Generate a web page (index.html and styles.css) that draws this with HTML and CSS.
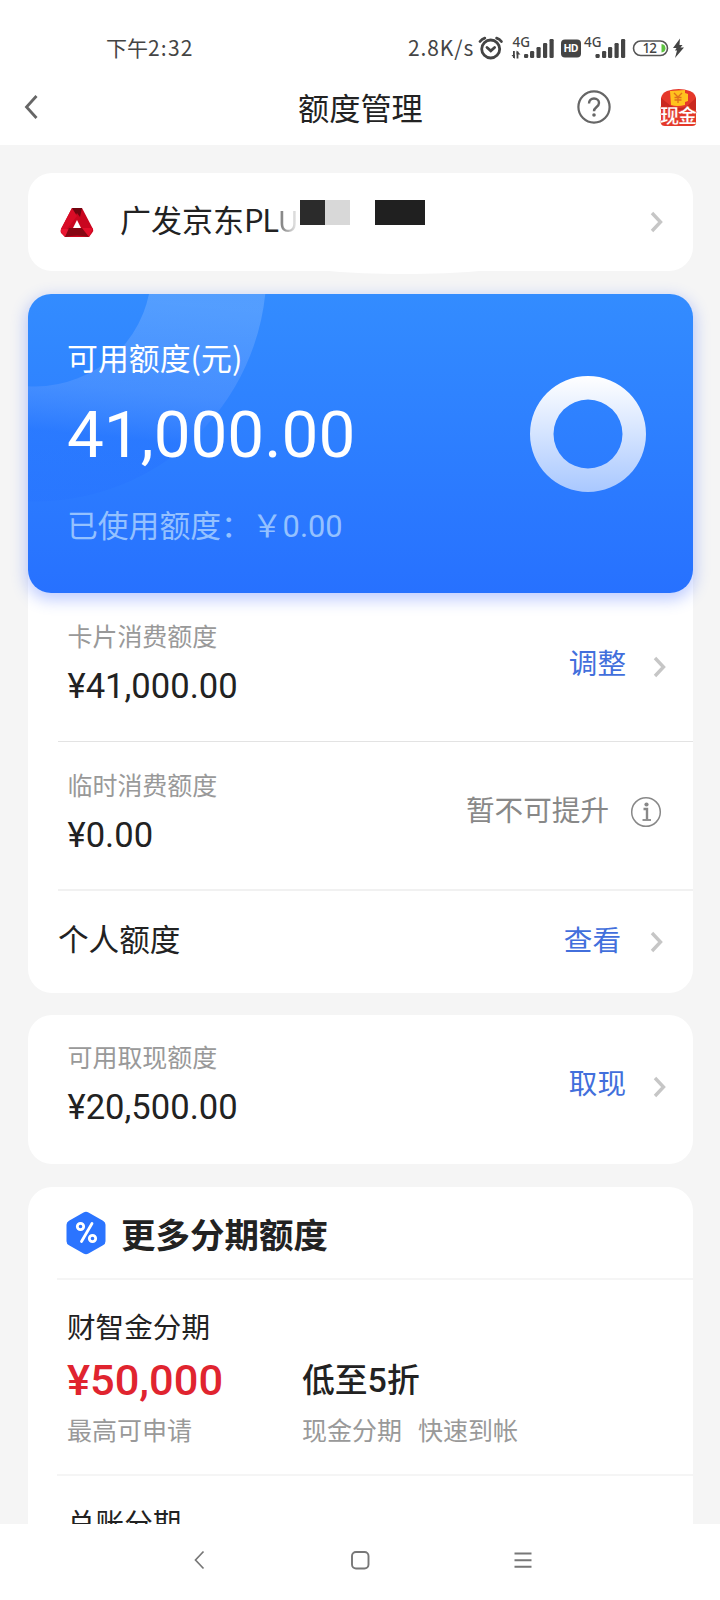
FILE: index.html
```html
<!DOCTYPE html>
<html lang="zh-CN">
<head>
<meta charset="utf-8">
<title>额度管理</title>
<link rel="stylesheet" href="styles.css">
</head>
<body>
<svg class="defs" width="0" height="0"><symbol id="chev" viewBox="0 0 14 22"><path d="M2 2l8.500 9-8.500 9" fill="none" stroke="#c6c6c6" stroke-width="3.400"/></symbol></svg>
<header class="top">
  <div class="status">
    <span class="clock">下午<i class="time">2:32</i></span>
    <span class="speed">2.8K/s</span>
    <svg class="sysicons" width="214" height="30" viewBox="476 33 214 30">
      <g fill="none" stroke="#444" stroke-width="2.800" stroke-linecap="round">
        <circle cx="490.700" cy="49" r="9"/>
        <path d="M487 47.500l3.800 3.300 3.800-3.300M480 41.500q2-2.500 4.800-3.300M496.600 38.200q3 .8 4.800 3.300"/>
      </g>
      <g fill="#444">
        <path d="M513 58V51h1.800v7zM516.600 58.500v-7h1.800v7z"/><path d="M511.500 55l3.300 4v-4zM520.500 54.500l-3.900-4v4z"/>
        <rect x="524" y="54" width="4.200" height="4" rx="1.200"/><rect x="530" y="51" width="4.200" height="7" rx="1.200"/><rect x="536.500" y="47" width="4.200" height="11" rx="1.200"/><rect x="543" y="43" width="4.200" height="15" rx="1.200"/><rect x="549.500" y="39" width="4.200" height="19" rx="1.200"/>
        <rect x="561" y="39.500" width="20" height="18" rx="4"/>
        <rect x="595.500" y="54" width="4.200" height="4" rx="1.200"/><rect x="602" y="51" width="4.200" height="7" rx="1.200"/><rect x="608" y="47" width="4.200" height="11" rx="1.200"/><rect x="614.500" y="43" width="4.200" height="15" rx="1.200"/><rect x="621" y="39" width="4.200" height="19" rx="1.200"/>
        <path d="M680 38.500l-7 9.500h3.500l-1.500 2.500h2l-2 7.500 9-10.500h-3.500l2-2.500h-3z"/>
      </g>
      <rect x="633.500" y="41" width="34" height="14.500" rx="7.200" fill="none" stroke="#555" stroke-width="1.600"/>
      <path d="M661.500 44v8.500q4-.5 4-4.200t-4-4.300z" fill="#5cc23f"/>
      <g class="sys-t">
        <text x="512.500" y="46.500" font-size="13.500" textLength="17.500" lengthAdjust="spacingAndGlyphs">4G</text>
        <text x="584" y="46.500" font-size="13.500" textLength="17.500" lengthAdjust="spacingAndGlyphs">4G</text>
        <text x="563.500" y="52.300" font-size="10.500" font-weight="700" class="hd" textLength="15">HD</text>
        <text x="642.500" y="53.200" font-size="13.500" textLength="14.500">12</text>
      </g>
    </svg>
  </div>
  <nav class="titlebar">
    <svg class="back" width="16" height="26" viewBox="0 0 16 26"><path d="M13.500 2L3.500 13l10 11" fill="none" stroke="#666" stroke-width="2.800"/></svg>
    <h1 class="page-title">额度管理</h1>
    <svg class="help" width="36" height="36" viewBox="0 0 36 36"><circle cx="18" cy="18" r="15.600" fill="none" stroke="#666" stroke-width="2.200"/><path d="M13 14.500c0-3 2-5 5-5s5 1.900 5 4.500c0 4-5 4-5 8.200" fill="none" stroke="#666" stroke-width="2.400"/><circle cx="18" cy="26" r="1.800" fill="#666"/></svg>
    <svg class="cash" width="40" height="40" viewBox="0 0 40 40">
      <path d="M2 10Q3 5 8 3Q20-1 31 3Q36 5 37 10V35Q37 38 33 38H6Q2 38 2 35z" fill="#e5382a"/>
      <path d="M2 10l10 8q8 4 16 0l9-8v12H2z" fill="#c9281e"/>
      <path d="M11 3l15-1v3l3 1v7l-3 1v3q-8 2-14 0z" fill="#ffc21e"/>
      <path d="M15 5l4 4 4-4M19 9v6M15.500 9.500h7M15.500 12h7" fill="none" stroke="#e0701c" stroke-width="1.300"/>
      <text class="cash-t" x="1" y="35" font-size="19" textLength="37">现金</text>
    </svg>
  </nav>
</header>
<main class="page">
  <section class="card account">
    <svg class="logo" width="34" height="30" viewBox="0 0 34 30">
      <path d="M12 0h10l11 21q1 2-1 4l-3 4H5l-4-4q-1-2 0-4z" fill="#c9061f"/>
      <path d="M12 0h10l-2 9-3-4-2 4z" fill="#6f0510"/><path d="M12 0l5 8-10 13-6 0z" fill="#d80c26"/><path d="M1 21l5 0 7 1-8 7-4-5z" fill="#ea1733"/><path d="M5 29l4-9h16l4 9q-12-3-24 0z" fill="#860713"/><path d="M22 20l11 0-4 9z" fill="#e40f2b"/>
      <path d="M17 12l4 8h-8z" fill="#fff"/>
    </svg>
    <span class="account-name">广发京东<i class="pl">PL</i><i class="fade">U</i></span>
    <span class="mask"><i class="m-dark"></i><i class="m-light"></i><i class="m-gap"></i><i class="m-black"></i></span>
    <svg class="chev"><use href="#chev"/></svg>
  </section>
  <section class="quota">
    <div class="hero">
      <svg class="arcs" width="665" height="299" viewBox="0 0 665 299"><defs><linearGradient id="arc" gradientUnits="userSpaceOnUse" x1="40" y1="0" x2="20" y2="212"><stop offset="0" stop-color="#fff" stop-opacity=".16"/><stop offset=".42" stop-color="#e4e0ff" stop-opacity=".12"/><stop offset=".65" stop-color="#1a5cff" stop-opacity=".16"/><stop offset="1" stop-color="#1a5cff" stop-opacity=".08"/></linearGradient></defs><circle cx="7" cy="-24" r="174" fill="none" stroke="url(#arc)" stroke-width="115"/></svg>
      <div class="hero-text">
        <div class="hero-label">可用额度(元)</div>
        <div class="hero-amount">41,000.00</div>
        <div class="hero-used">已使用额度：￥<i class="num">0.00</i></div>
      </div>
      <svg class="ring" width="116" height="116" viewBox="0 0 116 116"><defs><linearGradient id="ring" x1="0" y1="0" x2="0" y2="1"><stop offset="0" stop-color="#fff"/><stop offset="1" stop-color="#a9c8ff"/></linearGradient></defs><path fill="url(#ring)" fill-rule="evenodd" d="M58 0a58 58 0 1 1 0 116a58 58 0 1 1 0-116zM58 23.500a34.500 34.500 0 1 0 0 69a34.500 34.500 0 1 0 0-69z"/></svg>
    </div>
    <div class="row row-card">
      <div class="pair"><span class="label">卡片消费额度</span><span class="amount">¥41,000.00</span></div>
      <a class="link">调整</a><svg class="chev"><use href="#chev"/></svg>
    </div>
    <div class="row row-temp">
      <div class="pair"><span class="label">临时消费额度</span><span class="amount">¥0.00</span></div>
      <span class="muted">暂不可提升</span>
      <svg class="info" width="32" height="32" viewBox="0 0 32 32"><g fill="none" stroke="#888" stroke-width="1.500"><circle cx="16" cy="16" r="14.300"/><path d="M13.500 13h3.500v10.500" stroke-width="2.400"/><path d="M12.500 24h8.500" stroke-width="1.800"/></g><circle cx="16.500" cy="8.500" r="2.100" fill="#888"/></svg>
    </div>
    <div class="row row-person"><span class="person">个人额度</span><a class="link">查看</a><svg class="chev"><use href="#chev"/></svg></div>
  </section>
  <section class="card cashout">
    <div class="pair"><span class="label">可用取现额度</span><span class="amount">¥20,500.00</span></div>
    <a class="link">取现</a><svg class="chev"><use href="#chev"/></svg>
  </section>
  <section class="more">
    <div class="more-head">
      <svg width="40" height="44" viewBox="0 0 40 44"><path d="M17.500 1.500q2.500-1.300 5 0l14.500 8.200q2.500 1.400 2.500 4v16.600q0 2.600-2.500 4l-14.500 8.200q-2.500 1.300-5 0L3 34.300q-2.500-1.400-2.500-4V13.700q0-2.600 2.500-4z" fill="#2b74ff"/><g fill="none" stroke="#fff" stroke-width="2.800" stroke-linecap="round"><circle cx="14.500" cy="15.500" r="3.200"/><circle cx="26.500" cy="27.500" r="3.200"/><path d="M26 12.500L15.500 30.500"/></g></svg>
      <h2 class="more-title">更多分期额度</h2>
    </div>
    <div class="plan">
      <div class="plan-name">财智金分期</div>
      <div class="plan-main"><span class="price">¥50,000</span><span class="promo">低至<i class="five">5</i>折</span></div>
      <div class="plan-sub"><span class="sub-a">最高可申请</span><span class="sub-b">现金分期</span><span>快速到帐</span></div>
    </div>
    <div class="next">总账分期</div>
  </section>
</main>
<footer class="navbar">
  <svg width="12" height="20" viewBox="0 0 12 20"><path d="M9.500 1.500L1.500 10l8 8.500" fill="none" stroke="#777" stroke-width="1.700"/></svg>
  <svg width="20" height="20" viewBox="0 0 20 20"><rect x="2" y="2" width="16.500" height="16.500" rx="4" fill="none" stroke="#777" stroke-width="1.900"/></svg>
  <svg width="18" height="20" viewBox="0 0 18 20"><path d="M.5 3.500h17M.5 10.200h17M.5 16.800h17" stroke="#777" stroke-width="1.900"/></svg>
</footer>
</body>
</html>
```

FILE: styles.css
```css
* { box-sizing: border-box; margin: 0; padding: 0; }
i { font-style: normal; }
svg { display: block; flex: none; }
.defs { position: absolute; }
body {
  width: 720px; height: 1600px; overflow: hidden;
  display: flex; flex-direction: column;
  background: #f5f5f5; color: #222;
  font-family: "Noto Sans CJK SC", sans-serif;
  white-space: nowrap;
}
.top { height: 145px; background: #fff; flex: none; }
.status { display: flex; height: 68px; padding: 27px 30px 0 106px; color: #444; font-size: 21px; line-height: 40px; }
.clock { width: 302px; }
.time { letter-spacing: 1.2px; }
.speed { width: 68px; letter-spacing: .9px; }
.sysicons { margin-top: 6px; }
.sys-t { font-family: "Noto Sans", sans-serif; fill: #444; font-weight: 500; }
.hd { fill: #fff; }
.titlebar { display: flex; align-items: flex-start; height: 77px; padding-left: 23px; }
.back { margin-top: 26px; }
.page-title { margin-left: 259px; width: 278px; font-size: 31.200px; font-weight: 400; line-height: 40px; margin-top: 19px; }
.help { margin-top: 21px; }
.cash { margin: 20px 0 0 47px; }
.cash-t { font-weight: 700; fill: #fff; stroke: #e03424; stroke-width: .3px; }
.page { flex: none; height: 1379px; overflow: hidden; padding: 28px 27px 0 28px; }
.card, .quota { background: #fff; border-radius: 24px; }
.account { position: relative; display: flex; height: 98px; padding-left: 32px; }
.account::after { content: ""; position: absolute; left: 270px; bottom: -3px; width: 212px; height: 10px; border-radius: 50% / 0 0 100% 100%; background: #fff; }
.logo { margin-top: 35px; }
.account-name { margin: 26px 0 0 26px; width: 152px; font-size: 31px; line-height: 40px; display: flex; }
.pl { letter-spacing: -1.300px; }
.fade { background: linear-gradient(90deg, #888 20%, #e5e5e5 85%); -webkit-background-clip: text; background-clip: text; color: transparent; font-size: 29px; }
.mask { display: flex; margin: 27px 0 0 28px; height: 25px; }
.mask i { width: 25px; }
.m-dark { background: #2b2b2b; }
.m-light { background: #d8d8d8; }
.mask .m-black { width: 50px; background: #202020; }
.chev { width: 14px; height: 22px; }
.account .chev { margin: 38px 29px 0 auto; }
.quota { margin-top: 23px; height: 699px; }
.hero { position: relative; height: 299px; border-radius: 23px; background: linear-gradient(#338cff, #2771ff); box-shadow: 0 5px 15px 2px rgba(60, 100, 255, .32); display: flex; color: #fff; }
.arcs { position: absolute; inset: 0; border-radius: 23px; overflow: hidden; }
.hero-text { position: relative; padding: 42px 0 0 39px; width: 502px; }
.hero-label { font-size: 30.900px; line-height: 42px; }
.hero-amount { font-family: Roboto, sans-serif; font-size: 65.600px; line-height: 80px; margin-top: 17px; }
.hero-used { color: #94c1ff; font-size: 30.800px; line-height: 40px; margin-top: 29px; }
.num, .amount { font-family: Roboto, sans-serif; }
.ring { margin-top: 82px; }
.row { display: flex; margin-left: 30px; }
.pair { display: flex; flex-direction: column; }
.label { font-size: 25px; line-height: 36px; color: #999; letter-spacing: -.05px; }
.amount { font-size: 34.600px; line-height: 42px; margin-top: 12px; }
.link { color: #426fdc; font-size: 28.600px; line-height: 40px; }
.row-card { height: 149px; padding: 24px 26px 0 9.500px; border-bottom: 1px solid #e3e3e3; }
.row .link, .cashout .link { margin-left: auto; }
.row-card .link { margin-top: 25px; }
.row-card .chev { margin: 39px 0 0 27px; }
.row-temp { height: 149px; padding: 24px 31px 0 9.500px; border-bottom: 2px solid #f1f1f1; }
.muted { margin: 23px 0 0 auto; font-size: 28.600px; line-height: 40px; color: #888; }
.info { margin: 30px 0 0 21px; }
.row-person { height: 102px; padding: 28px 29px 0 0; }
.person { font-size: 30.600px; line-height: 40px; margin-top: -1px; }
.row-person .link { margin-right: 1px; }
.row-person .chev { margin: 12px 0 0 28px; }
.cashout { display: flex; height: 149px; margin-top: 22px; padding: 23px 26px 0 39.500px; }
.cashout .link { margin-top: 24px; }
.cashout .chev { margin: 38px 0 0 27px; }
.more { margin-top: 23px; height: 420px; background: #fff; border-radius: 24px; padding-left: 29px; }
.more-head { height: 93px; border-bottom: 2px solid #f5f5f5; display: flex; padding: 24px 0 0 9px; }
.more-title { margin: -1px 0 0 15px; font-size: 34.500px; line-height: 46px; font-weight: 700; }
.plan { height: 196px; padding: 26px 0 0 10px; border-bottom: 2px solid #f5f5f5; }
.plan-name { font-size: 28.600px; line-height: 40px; }
.plan-main { display: flex; height: 63px; align-items: center; }
.price { width: 235px; font: 500 43.400px/60px Roboto, sans-serif; color: #e0242f; padding-top: 6px; }
.promo { font-size: 32.800px; font-weight: 500; }
.five { font-family: Roboto, sans-serif; font-size: 34px; }
.plan-sub { display: flex; color: #999; font-size: 25px; line-height: 40px; }
.sub-a { width: 235px; }
.sub-b { width: 116px; }
.next { padding: 26px 0 0 10px; font-size: 28.600px; line-height: 40px; }
.navbar { flex: 1; background: #fff; display: flex; padding: 26px 188px 0 194px; justify-content: space-between; }
```
